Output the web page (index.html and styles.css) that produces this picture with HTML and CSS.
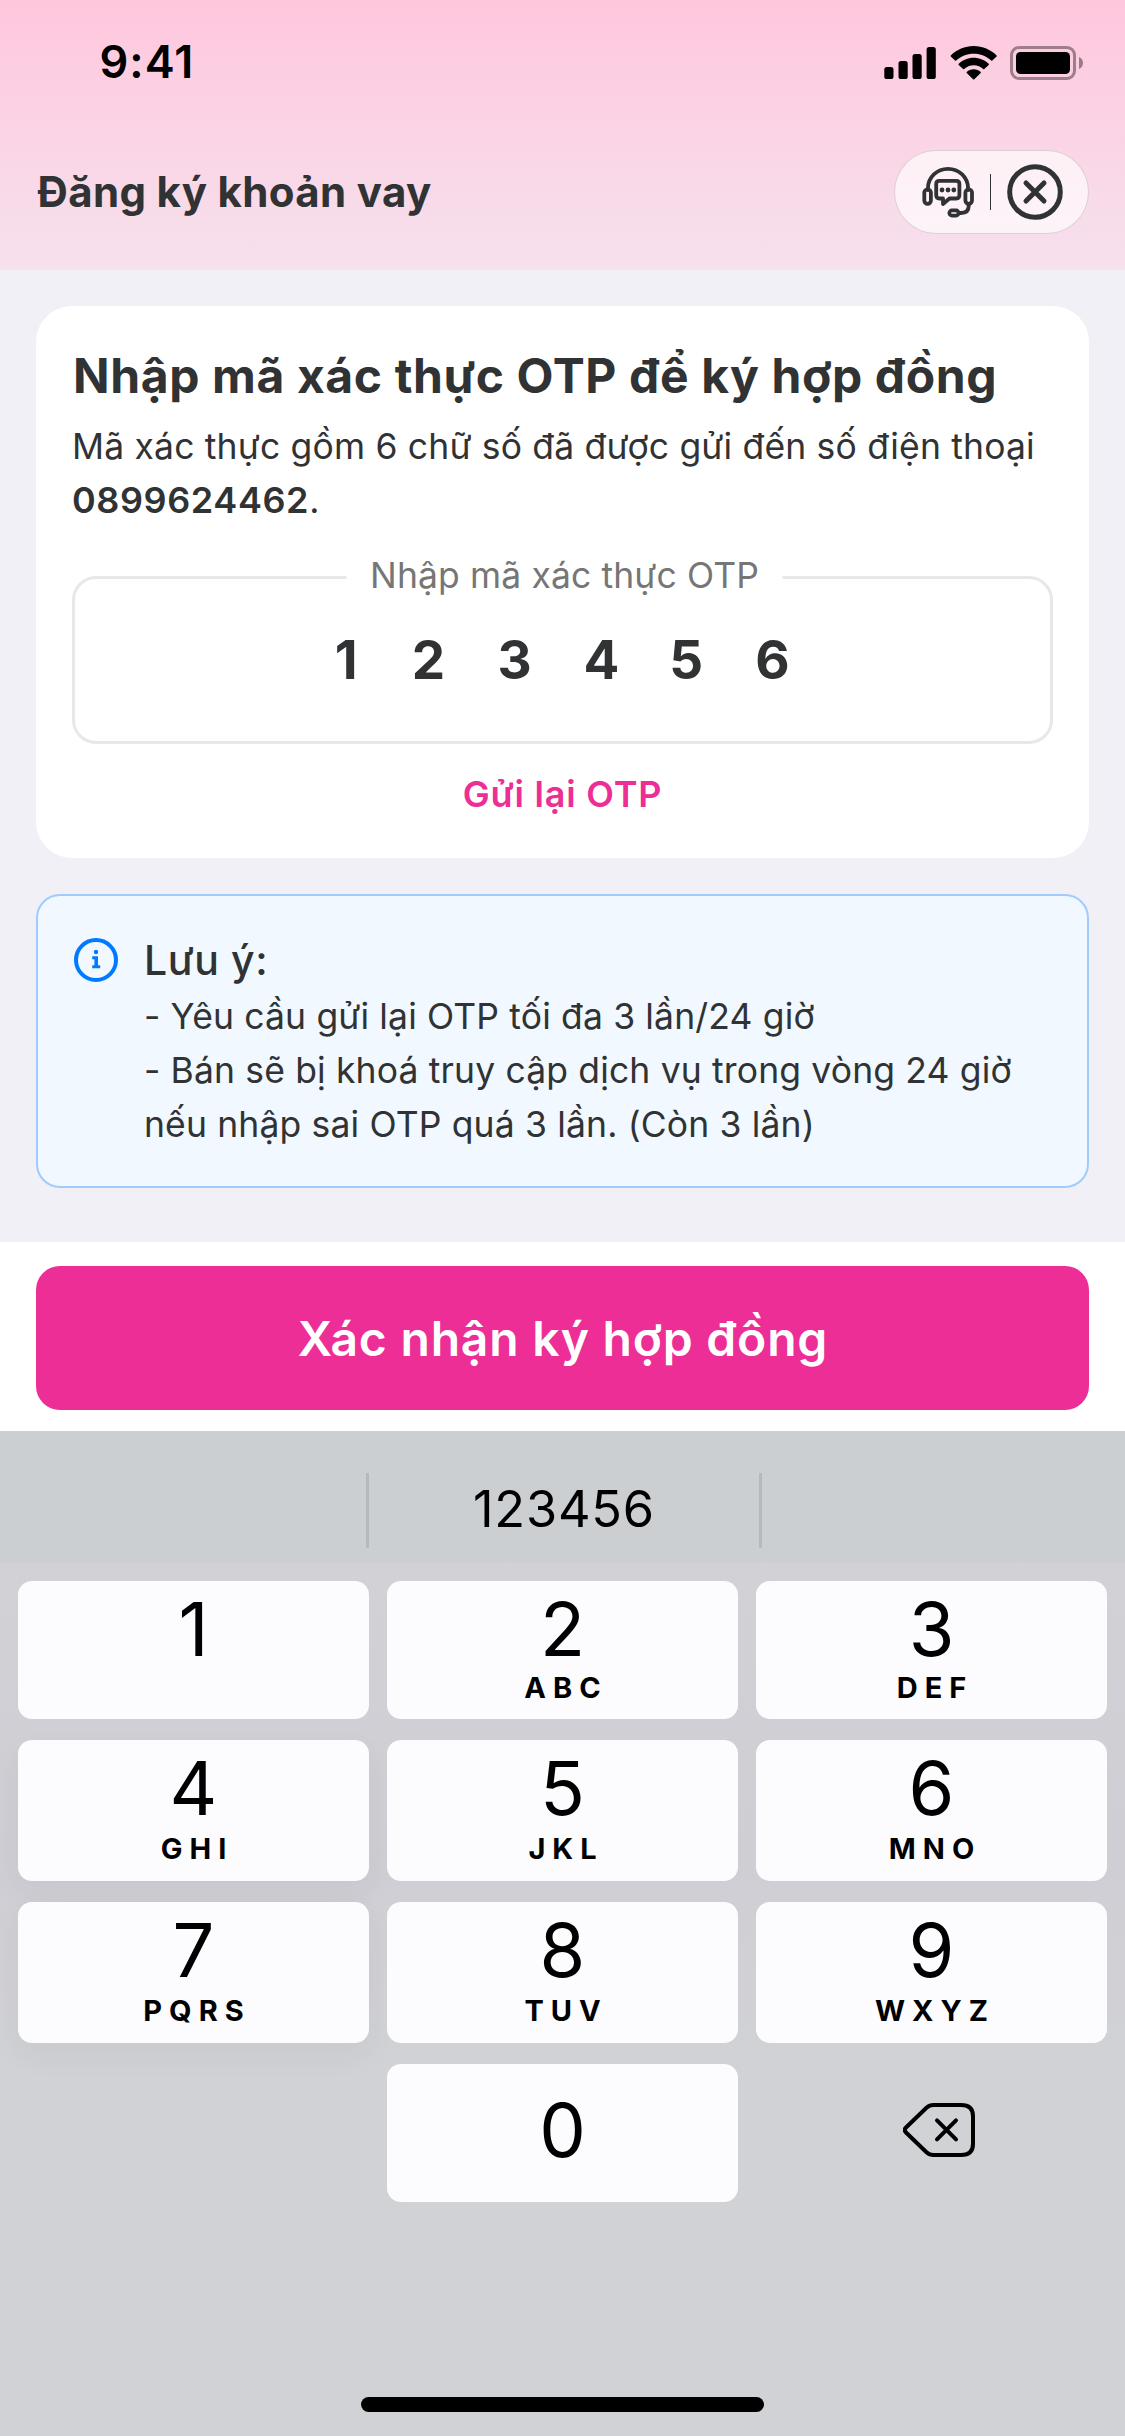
FILE: index.html
```
<!DOCTYPE html>
<html lang="vi">
<head>
<meta charset="utf-8">
<title>Đăng ký khoản vay</title>
<link rel="stylesheet" href="styles.css">
</head>
<body>
<div class="screen">
  <header class="header">
    <div class="status">
      <span class="status-time">9:41</span>
      <svg class="status-icons" viewBox="884 40 200 44" aria-hidden="true">
        <rect x="884.3" y="67" width="9.2" height="12" rx="2.6"/>
        <rect x="898.5" y="61" width="9.2" height="18" rx="2.6"/>
        <rect x="912.5" y="54" width="9.2" height="25" rx="2.6"/>
        <rect x="926.6" y="47" width="9.2" height="32" rx="2.6"/>
        <path d="M973.7 46C982.6 46 990.7 49.6 996.6 55.4Q997.2 56 996.6 56.6L992.3 60.6Q991.8 61.1 991.2 60.6C986.6 56.3 980.5 53.7 973.7 53.7S960.8 56.3 956.2 60.6Q955.6 61.1 955.1 60.6L950.8 56.6Q950.2 56 950.8 55.4C956.7 49.6 964.8 46 973.7 46Z"/>
        <path d="M973.7 57.7C979.6 57.7 984.9 60 988.7 63.8Q989.2 64.4 988.7 64.9L984.3 69Q983.7 69.5 983.2 69C980.7 66.7 977.4 65.3 973.7 65.3S966.7 66.7 964.2 69Q963.7 69.5 963.1 69L958.7 64.9Q958.2 64.4 958.7 63.8C962.5 60 967.8 57.7 973.7 57.7Z"/>
        <path d="M973.7 69.3C976.4 69.3 978.9 70.3 980.7 71.9Q981.2 72.4 980.7 72.9L974.3 79.3Q973.7 79.8 973.1 79.3L966.7 72.9Q966.2 72.4 966.7 71.9C968.5 70.3 971 69.3 973.7 69.3Z"/>
        <rect class="battery-shell" x="1011.5" y="47.5" width="63" height="31" rx="7.5"/>
        <rect x="1016" y="52" width="54" height="22" rx="4.5"/>
        <path class="battery-tip" d="M1079 57C1081.5 58 1083 60.3 1083 63S1081.5 68 1079 69Z"/>
      </svg>
    </div>
    <div class="nav">
      <h1 class="nav-title">Đăng ký khoản vay</h1>
      <div class="nav-pill">
        <svg class="icon-support" viewBox="922 165 52 52" aria-hidden="true">
          <path d="M928 189V187A20 19.2 0 0 1 968 187V189"/>
          <rect x="924.3" y="188.3" width="6.6" height="14.5" rx="3.3"/>
          <rect x="965.4" y="188.3" width="6.6" height="14.5" rx="3.3"/>
          <path d="M939.4 179.9H956.2Q959.4 179.9 959.4 183.1V194.3Q959.4 197.5 956.2 197.5H949.5L943 203V197.5H939.4Q936.2 197.5 936.2 194.3V183.1Q936.2 179.9 939.4 179.9Z"/>
          <path d="M968.7 203V205Q968.7 212 961 212H958.5"/>
          <rect class="thin" x="949.3" y="209.4" width="9.4" height="5.2" rx="2.6"/>
          <g class="dots"><circle cx="942" cy="189" r="2.4"/><circle cx="948" cy="189" r="2.4"/><circle cx="953.8" cy="189" r="2.4"/></g>
        </svg>
        <span class="nav-divider"></span>
        <svg class="icon-close" viewBox="0 0 56 56" aria-hidden="true">
          <circle cx="28" cy="28" r="25.3"/>
          <path d="M19 19L37 37M37 19L19 37"/>
        </svg>
      </div>
    </div>
  </header>

  <main class="content">
    <section class="card">
      <h2 class="card-title">Nhập mã xác thực OTP để ký hợp đồng</h2>
      <p class="card-text">Mã xác thực gồm 6 chữ số đã được gửi đến số điện thoại <strong class="phone">0899624462</strong>.</p>
      <div class="otp-field">
        <span class="otp-label">Nhập mã xác thực OTP</span>
        <div class="otp-digits"><span>1</span><span>2</span><span>3</span><span>4</span><span>5</span><span>6</span></div>
      </div>
      <a class="resend">Gửi lại OTP</a>
    </section>

    <section class="notice">
      <svg class="icon-info" viewBox="0 0 44 44" aria-hidden="true">
        <circle class="ring" cx="22" cy="22" r="20"/>
        <circle cx="22" cy="14" r="2.2"/>
        <path d="M18.2 18.3H24V27.2H26.2V30.2H18.2V27.2H20.4V21.3H18.2Z"/>
      </svg>
      <div>
        <h3 class="notice-title">Lưu ý:</h3>
        <p class="notice-text">- Yêu cầu gửi lại OTP tối đa 3 lần/24 giờ</p>
        <p class="notice-text">- Bán sẽ bị khoá truy cập dịch vụ trong vòng 24 giờ<br>nếu nhập sai OTP quá 3 lần. (Còn 3 lần)</p>
      </div>
    </section>
  </main>

  <div class="action-bar">
    <button class="submit" type="button">Xác nhận ký hợp đồng</button>
  </div>

  <div class="keyboard">
    <div class="suggestions">
      <span></span><span class="suggestion">123456</span><span></span>
    </div>
    <div class="keys">
      <div class="key"><span class="digit">1</span></div>
      <div class="key"><span class="digit">2</span><span class="letters">ABC</span></div>
      <div class="key"><span class="digit">3</span><span class="letters">DEF</span></div>
      <div class="key key-tall key-raised"><span class="digit">4</span><span class="letters">GHI</span></div>
      <div class="key key-tall"><span class="digit">5</span><span class="letters">JKL</span></div>
      <div class="key key-tall"><span class="digit">6</span><span class="letters">MNO</span></div>
      <div class="key key-tall key-raised"><span class="digit">7</span><span class="letters">PQRS</span></div>
      <div class="key key-tall"><span class="digit">8</span><span class="letters">TUV</span></div>
      <div class="key key-tall"><span class="digit">9</span><span class="letters">WXYZ</span></div>
      <div class="key-zero key"><span class="digit">0</span></div>
      <div class="key-delete">
        <svg class="icon-delete" viewBox="903 2103 72 54" aria-hidden="true">
          <path d="M933.5 2105H961Q973 2105 973 2116V2144Q973 2155 961 2155H933.5Q929.5 2155 926.5 2152.3L906 2132.5Q903.5 2130 906 2127.5L926.5 2107.7Q929.5 2105 933.5 2105Z"/>
          <path d="M937 2120.3L956 2139.3M956 2120.3L937 2139.3"/>
        </svg>
      </div>
    </div>
    <div class="home-indicator"></div>
  </div>
</div>
</body>
</html>
```
FILE: styles.css
```
* { box-sizing: border-box; }

body {
  margin: 0;
  font-family: "Inter", "Liberation Sans", sans-serif;
  color: #303233;
}

h1, h2, h3, p { margin: 0; }

.screen {
  display: flex;
  flex-direction: column;
  width: 1125px;
  height: 2436px;
  background: #f1f0f6;
  overflow: hidden;
}

/* Header */
.header {
  height: 270px;
  background: linear-gradient(#ffc7dd, #f6e1ed);
}

.status {
  display: flex;
  justify-content: space-between;
  align-items: center;
  height: 124px;
  padding: 0 41px 0 99.5px;
}

.status-time {
  color: #000;
  font-size: 45px;
  font-weight: 600;
  line-height: 60px;
  letter-spacing: 1px;
}

.status-icons { width: 200px; height: 44px; }
.battery-shell { fill: none; stroke: #000; stroke-width: 3; opacity: .38; }
.battery-tip { opacity: .4; }

.nav {
  display: flex;
  justify-content: space-between;
  align-items: flex-start;
  padding: 26px 36px 0 37.5px;
}

.nav-title {
  font-size: 42px;
  font-weight: 700;
  line-height: 84px;
  letter-spacing: .35px;
}

.nav-pill {
  display: flex;
  align-items: center;
  gap: 15.5px;
  width: 195px;
  height: 84px;
  padding: 0 25px 0 27px;
  border: 1px solid rgba(0, 0, 0, .14);
  border-radius: 42px;
  background: rgba(255, 255, 255, .65);
}

.icon-support, .icon-close {
  flex: none;
  fill: none;
  stroke: #303233;
  stroke-linecap: round;
  stroke-linejoin: round;
}

.icon-support { width: 52px; height: 52px; stroke-width: 3.8px; }
.icon-support .thin { stroke-width: 3.6px; }
.icon-support .dots { fill: #303233; stroke: none; }
.icon-close { width: 56px; height: 56px; stroke-width: 5px; }
.nav-divider { flex: none; width: 1.5px; height: 36px; background: #303233; }

/* Content */
.content {
  display: flex;
  flex-direction: column;
  gap: 36px;
  height: 972px;
  padding: 36px;
}

.card {
  display: flex;
  flex-direction: column;
  height: 552px;
  padding: 36px;
  border-radius: 36px;
  background: #fff;
}

.card-title {
  padding-left: 1px;
  font-size: 48px;
  font-weight: 700;
  line-height: 67px;
  letter-spacing: .62px;
  white-space: nowrap;
}

.card-text {
  margin: 11px -12px 0 0;
  font-size: 35.5px;
  line-height: 54px;
  letter-spacing: .18px;
}

.phone { font-size: 36px; font-weight: 600; line-height: 1; letter-spacing: .6px; }

.otp-field {
  position: relative;
  display: flex;
  justify-content: center;
  align-items: center;
  height: 168px;
  margin-top: 48px;
  padding-right: 3px;
  border: 3px solid #e8e8e8;
  border-radius: 24px;
}

.otp-label {
  position: absolute;
  top: -30px;
  left: 50%;
  margin-left: 2px;
  padding: 0 24px;
  background: #fff;
  color: #767676;
  font-size: 35.5px;
  line-height: 54px;
  letter-spacing: .12px;
  white-space: nowrap;
  transform: translateX(-50%);
}

.otp-digits {
  display: flex;
  gap: 52.4px;
  font-size: 53px;
  font-weight: 700;
  line-height: 64px;
}

.otp-digits span { width: 33.5px; text-align: center; }
.otp-digits span:first-child { width: 26px; }

.resend {
  margin-top: 23px;
  color: #ec2e96;
  font-size: 36px;
  font-weight: 600;
  line-height: 54px;
  letter-spacing: .8px;
  text-align: center;
}

.notice {
  display: flex;
  gap: 26px;
  height: 294px;
  padding: 35px 20px 0 36px;
  border: 2px solid #9fccfd;
  border-radius: 24px;
  background: #f1f8ff;
}

.icon-info { flex: none; width: 44px; height: 44px; margin-top: 7px; fill: #007bff; }
.icon-info .ring { fill: none; stroke: #007bff; stroke-width: 4; }

.notice-title {
  margin-bottom: 1px;
  font-size: 41px;
  font-weight: 500;
  line-height: 58px;
  letter-spacing: .6px;
}

.notice-text {
  font-size: 35.5px;
  line-height: 54px;
  letter-spacing: .15px;
  white-space: nowrap;
}

/* Confirm button */
.action-bar {
  height: 189px;
  padding: 24px 36px 21px;
  background: #fff;
}

.submit {
  display: block;
  width: 100%;
  height: 144px;
  padding: 1px 0 0 1px;
  border: 0;
  border-radius: 24px;
  background: #ec2e96;
  color: #fff;
  font: 600 48px/60px "Inter", "Liberation Sans", sans-serif;
  letter-spacing: .8px;
}

/* Keyboard */
.keyboard {
  flex: 1;
  display: flex;
  flex-direction: column;
  background: #d1d2d6;
  color: #000;
}

.suggestions {
  display: grid;
  grid-template-columns: 366px 396px 1fr;
  height: 132px;
  padding: 42px 0 15px;
  background: #cccfd2;
}

.suggestion {
  border: solid #b6babd;
  border-width: 0 3px;
  font-size: 50.5px;
  line-height: 72px;
  letter-spacing: .8px;
  text-align: center;
}

.keys {
  display: grid;
  grid-template-columns: repeat(3, 351px);
  grid-template-rows: 138px 141px 141px 138px;
  gap: 21px 18px;
  padding: 18px;
  background: linear-gradient(#d2d1d6, #cfced4 45%, #d1d2d6 78%);
}

.key {
  display: flex;
  flex-direction: column;
  align-items: center;
  padding-top: 8px;
  border-radius: 14px;
  background: #fcfcfe;
}

.key-raised { box-shadow: 0 12px 30px rgba(60, 50, 60, .05); }

.digit { font-size: 74px; line-height: 80px; }

.letters {
  margin-top: 2.5px;
  padding-left: 7px;
  font-size: 29px;
  font-weight: 700;
  line-height: 32px;
  letter-spacing: 7px;
}

.key-tall .letters { margin-top: 4.5px; }

.key-zero {
  grid-column: 2;
  justify-content: center;
  padding: 0 0 6px;
}

.key-delete {
  display: flex;
  justify-content: center;
  align-items: center;
  padding: 0 0 6px 15px;
}

.icon-delete {
  width: 72px;
  height: 54px;
  fill: none;
  stroke: #000;
  stroke-width: 4px;
  stroke-linecap: round;
  stroke-linejoin: round;
}

.home-indicator {
  width: 403px;
  height: 15px;
  margin: auto auto 24px;
  border-radius: 8px;
  background: #000;
}
```
